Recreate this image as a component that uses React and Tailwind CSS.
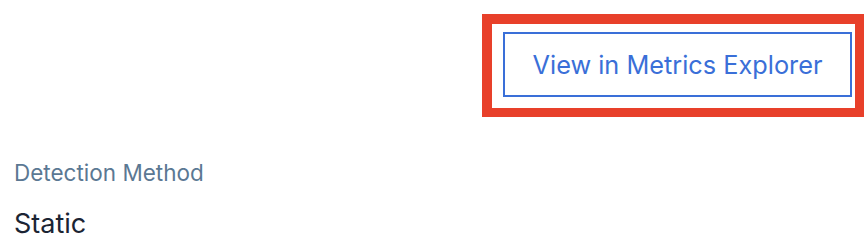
import React from 'react';

export default function App() {
  return (
    <div className="w-[864px] h-[244px] bg-white overflow-hidden font-['Inter',sans-serif]">
      <div className="flex justify-end pt-[14px]">
        <div className="border-t-[10px] border-l-[10px] border-r-[9px] border-b-[9px] border-[#e8402a] pl-[11px] pt-[8px] pr-[3px] pb-[11px]">
          <button className="w-[349px] h-[65px] border-2 border-[#3a6fd8] text-[#3a6fd8] text-[25.3px] flex items-center justify-center">
            View in Metrics Explorer
          </button>
        </div>
      </div>
      <div className="pl-[14px] pt-[42px]">
        <div className="text-[22.5px] text-[#5b7893] leading-[28px]">Detection Method</div>
        <div className="mt-[21px] text-[27px] text-[#1b2433] leading-[32px]">Static</div>
      </div>
    </div>
  );
}
